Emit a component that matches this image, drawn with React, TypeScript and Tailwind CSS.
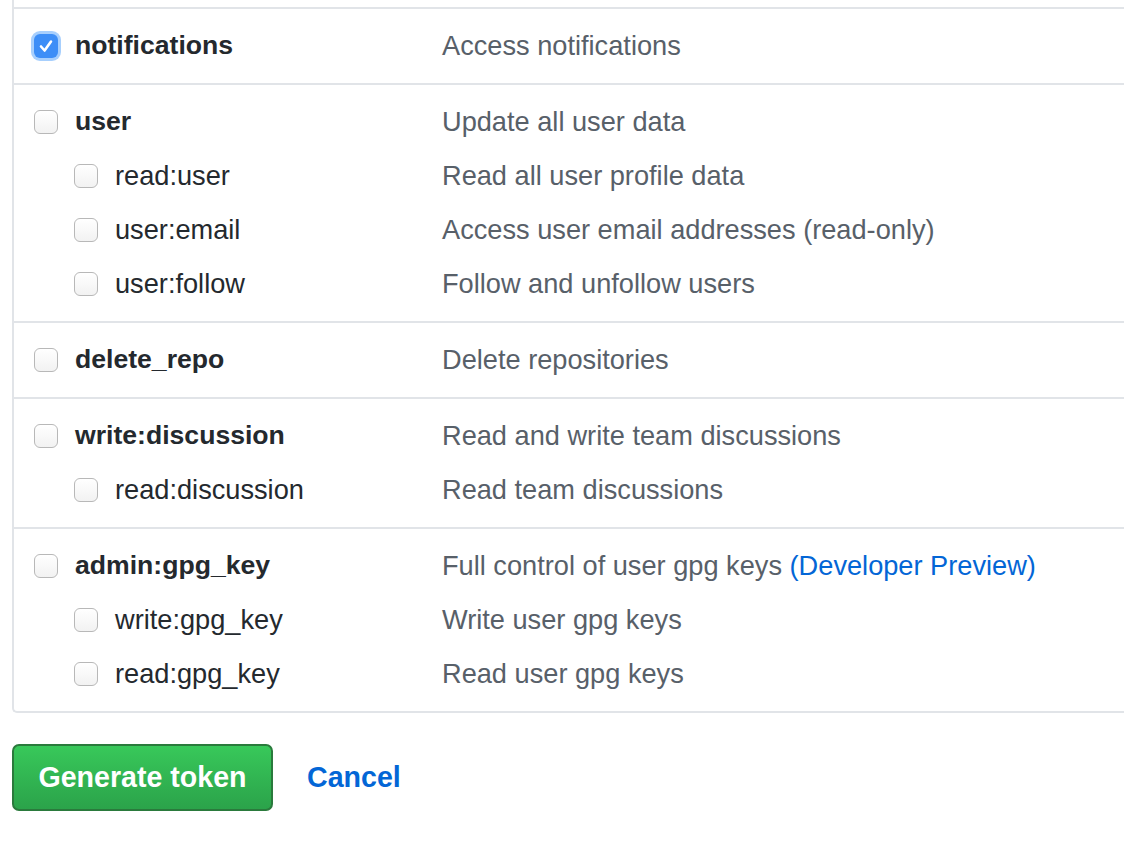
import React from "react";

interface Scope {
  name: string;
  desc: string;
  preview?: boolean;
  checked?: boolean;
  children?: { name: string; desc: string }[];
}

const scopes: Scope[] = [
  { name: "notifications", desc: "Access notifications", checked: true },
  {
    name: "user",
    desc: "Update all user data",
    children: [
      { name: "read:user", desc: "Read all user profile data" },
      { name: "user:email", desc: "Access user email addresses (read-only)" },
      { name: "user:follow", desc: "Follow and unfollow users" },
    ],
  },
  { name: "delete_repo", desc: "Delete repositories" },
  {
    name: "write:discussion",
    desc: "Read and write team discussions",
    children: [{ name: "read:discussion", desc: "Read team discussions" }],
  },
  {
    name: "admin:gpg_key",
    desc: "Full control of user gpg keys",
    preview: true,
    children: [
      { name: "write:gpg_key", desc: "Write user gpg keys" },
      { name: "read:gpg_key", desc: "Read user gpg keys" },
    ],
  },
];

const Checkbox = ({ checked = false }: { checked?: boolean }) =>
  checked ? (
    <span className="flex items-center justify-center w-[24px] h-[24px] shrink-0 rounded-[6px] bg-[#3d8ef7] shadow-[0_0_0_3px_#a7cffd]">
      <svg width="20" height="20" viewBox="0 0 20 20" fill="none">
        <path
          d="M5 10.5l3.6 4L15 5.5"
          stroke="white"
          strokeWidth="2.6"
          strokeLinecap="round"
          strokeLinejoin="round"
        />
      </svg>
    </span>
  ) : (
    <span className="block w-[24px] h-[24px] shrink-0 rounded-[6px] border-[1.5px] border-[#b8b8b8] bg-gradient-to-b from-white to-[#f2f2f2]" />
  );

const Row = ({
  name,
  desc,
  sub = false,
  checked,
  preview,
}: {
  name: string;
  desc: string;
  sub?: boolean;
  checked?: boolean;
  preview?: boolean;
}) => (
  <div className="flex items-center h-[54px]">
    <div
      className={
        sub
          ? "flex items-center w-[408px] pl-[40px] shrink-0"
          : "flex items-center w-[408px] shrink-0"
      }
    >
      <Checkbox checked={checked} />
      <span
        className={
          sub
            ? "ml-[17px] text-[27.2px] text-[#24292e]"
            : "ml-[17px] text-[26.6px] font-bold text-[#24292e]"
        }
      >
        {name}
      </span>
    </div>
    <span className="text-[27.2px] text-[#586069] whitespace-nowrap">
      {desc}
      {preview && <span className="text-[#0366d6]"> (Developer Preview)</span>}
    </span>
  </div>
);

export default function App() {
  return (
    <div className="w-[1124px] h-[841px] overflow-hidden bg-white font-['Liberation_Sans',Arial,sans-serif]">
      <div className="ml-[12px] w-[1200px] border-l-2 border-b-2 border-[#e1e4e8] rounded-bl-[5px] text-[27px]">
        <div className="h-[7px]" />
        {scopes.map((s) => (
          <div
            key={s.name}
            className="border-t-2 border-[#e1e4e8] pl-[20px] py-[10px]"
          >
            <Row
              name={s.name}
              desc={s.desc}
              checked={s.checked}
              preview={s.preview}
            />
            {s.children?.map((c) => (
              <Row key={c.name} name={c.name} desc={c.desc} sub />
            ))}
          </div>
        ))}
      </div>
      <div className="flex items-center mt-[31px] ml-[12px]">
        <button className="w-[261px] h-[67px] rounded-[7px] border-2 border-[#2a7a3c] bg-gradient-to-b from-[#38c85a] to-[#2ba34a] text-white font-bold text-[28.6px]">
          Generate token
        </button>
        <a className="ml-[34px] text-[#0366d6] font-bold text-[28.6px]">Cancel</a>
      </div>
    </div>
  );
}
